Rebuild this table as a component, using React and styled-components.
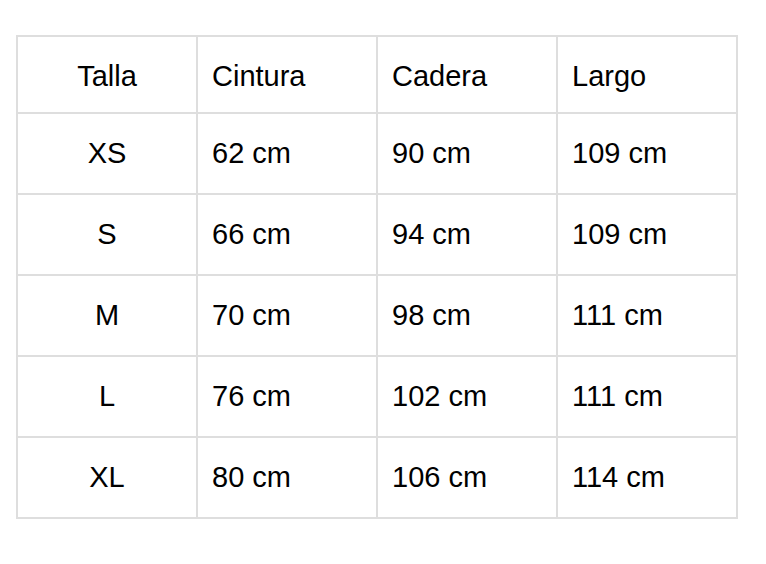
import React from "react";
import styled, { createGlobalStyle } from "styled-components";

const Global = createGlobalStyle`
  body { margin: 8px; background: #fff; font-family: "Liberation Sans", Arial, sans-serif; }
`;

const Wrap = styled.div`
  padding: 27px 0 0 8px;
`;

const Table = styled.table`
  border-collapse: collapse;
  width: 722px;
  table-layout: fixed;
  font-size: 29px;
  color: #000;
`;

const Row = styled.tr`
  height: ${(p) => (p.$head ? "77px" : "81px")};
`;

const Cell = styled.td`
  border: 2px solid #dedede;
  padding: ${(p) => (p.as === "th" ? "4px 14px 0" : "0 14px")};
  text-align: ${(p) => (p.$center ? "center" : "left")};
  vertical-align: middle;
  font-weight: normal;
`;

const head = ["Talla", "Cintura", "Cadera", "Largo"];
const rows = [
  ["XS", "62 cm", "90 cm", "109 cm"],
  ["S", "66 cm", "94 cm", "109 cm"],
  ["M", "70 cm", "98 cm", "111 cm"],
  ["L", "76 cm", "102 cm", "111 cm"],
  ["XL", "80 cm", "106 cm", "114 cm"],
];

export default function App() {
  return (
    <Wrap>
      <Global />
      <Table>
        <tbody>
          <Row $head>
            {head.map((h, i) => (
              <Cell as="th" key={h} $center={i === 0}>{h}</Cell>
            ))}
          </Row>
          {rows.map((r) => (
            <Row key={r[0]}>
              {r.map((c, i) => (
                <Cell key={i} $center={i === 0}>{c}</Cell>
              ))}
            </Row>
          ))}
        </tbody>
      </Table>
    </Wrap>
  );
}
